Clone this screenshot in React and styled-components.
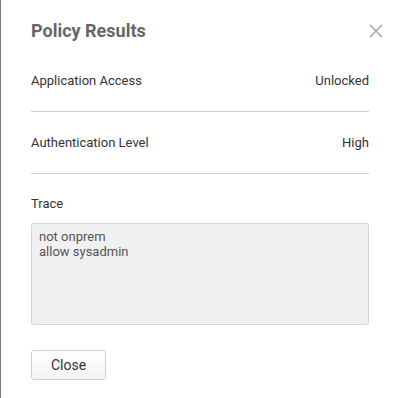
import React from 'react';
import styled, { createGlobalStyle } from 'styled-components';

const GlobalStyle = createGlobalStyle`
  html, body {
    margin: 0;
    padding: 0;
    background: #fff;
  }
  body {
    font-family: Roboto, "Liberation Sans", Arial, sans-serif;
  }
`;

const Dialog = styled.div`
  width: 400px;
  height: 398px;
  box-sizing: border-box;
  border-left: 1px solid #7a7a7a;
  padding: 19px 31px 0 30px;
  background: #fff;
  display: flex;
  flex-direction: column;
`;

const Header = styled.div`
  display: flex;
  align-items: center;
  justify-content: space-between;
  height: 24px;
  margin-bottom: 7px;
`;

const Title = styled.h2`
  margin: 0;
  font-size: 18px;
  line-height: 24px;
  font-weight: 700;
  color: #666;
`;

const CloseIcon = styled.button`
  border: 0;
  background: none;
  padding: 0;
  margin-right: -14px;
  width: 14px;
  height: 14px;
  display: flex;
  cursor: pointer;
`;

const Row = styled.div`
  display: flex;
  align-items: center;
  justify-content: space-between;
  height: 61px;
  border-bottom: 1px solid #ccc;
  font-size: 13px;
  color: #333;
`;

const TraceSection = styled.div`
  padding-top: 22px;
  display: flex;
  flex-direction: column;
`;

const Label = styled.div`
  font-size: 13px;
  line-height: 16px;
  color: #333;
  margin-bottom: 11px;
`;

const TraceBox = styled.div`
  height: 102px;
  box-sizing: border-box;
  border: 1px solid #d4d4d4;
  border-radius: 3px;
  background: #f0f0f0;
  padding: 5px 7px;
  font-size: 13px;
  line-height: 15px;
  color: #555;
  white-space: pre-line;
`;

const Footer = styled.div`
  margin-top: 25px;
`;

const Button = styled.button`
  width: 75px;
  height: 30px;
  border: 1px solid #d0d0d0;
  border-radius: 3px;
  background: linear-gradient(#fff, #f4f4f4);
  font-family: inherit;
  font-size: 14px;
  color: #333;
  cursor: pointer;
`;

export default function App() {
  return (
    <>
      <GlobalStyle />
      <Dialog>
        <Header>
          <Title>Policy Results</Title>
          <CloseIcon aria-label="close">
            <svg width="14" height="14" viewBox="0 0 14 14">
              <path d="M1 1 L13 13 M13 1 L1 13" stroke="#9aa0a8" strokeWidth="1.4" />
            </svg>
          </CloseIcon>
        </Header>
        <Row>
          <span>Application Access</span>
          <span>Unlocked</span>
        </Row>
        <Row>
          <span>Authentication Level</span>
          <span>High</span>
        </Row>
        <TraceSection>
          <Label>Trace</Label>
          <TraceBox>{'not onprem\nallow sysadmin'}</TraceBox>
        </TraceSection>
        <Footer>
          <Button>Close</Button>
        </Footer>
      </Dialog>
    </>
  );
}
